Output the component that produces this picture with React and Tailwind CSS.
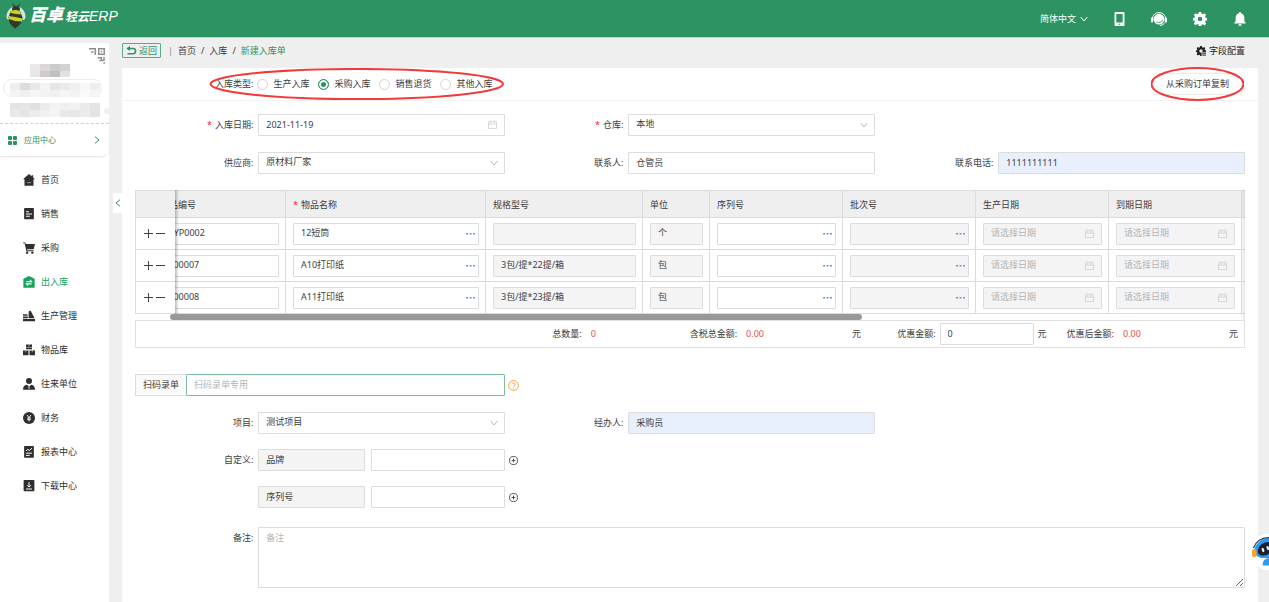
import { useEffect, useId, useRef } from "react";

const field =
  "block h-[22px] w-full min-w-0 rounded-[1px] border border-[#dcdcdc] px-[7px] pb-[2px] text-[9px] text-[#3c3c3c] outline-none placeholder:text-[#b4b4b4]";

function Icon({ size = "size-3", children, box = "0 0 16 16" }) {
  return (
    <svg viewBox={box} className={`${size} shrink-0`} fill="currentColor" aria-hidden="true">
      {children}
    </svg>
  );
}

const HomeIcon = () => (
  <Icon>
    <path d="M8 0 0 7h2v8.500h12V7h2L13.500 4.800V1.500h-2v1.600z" />
    <path d="M5.500 11.500h5" stroke="#999" strokeWidth="1.400" />
  </Icon>
);
const SalesIcon = () => (
  <Icon>
    <rect x="1.500" y="0" width="13" height="15" rx="1" />
    <path d="M4 5h4M4 8h8M4 11h5" stroke="#fff" strokeWidth="1.300" />
  </Icon>
);
const CartIcon = () => (
  <Icon>
    <path d="M0 .5h3l.7 2H16l-1.800 7H5.300l.3 1.500H14v1.200H4.500L2.200 1.800H0z" />
    <circle cx="5.500" cy="14.200" r="1.600" />
    <circle cx="12.500" cy="14.200" r="1.600" />
  </Icon>
);
const StockIcon = () => (
  <Icon>
    <path d="M8 0 .5 3.500V14.500q0 1.200 1.200 1.200h12.600q1.200 0 1.200-1.200V3.500z" />
    <path d="M4.500 7.500h7L9.300 5.300M11.500 10.500h-7l2.200 2.200" stroke="#fff" strokeWidth="1.400" fill="none" />
  </Icon>
);
const FactoryIcon = () => (
  <Icon>
    <path d="M0 5.500h6v2.200H0zM0 8.700h6.500v2.300H0zM0 12h16v3H0zM7.500 11V2L10 .5 15.500 11z" />
  </Icon>
);
const BoxesIcon = () => (
  <Icon>
    <path d="M4 .5h8v6.500H4zM0 8.500h7.300V15H0zM8.700 8.500H16V15H8.700z" />
    <path d="M8 .5v2.500M3.600 8.500V11M12.400 8.500V11M4 4.500h8" stroke="#fff" strokeWidth=".7" />
  </Icon>
);
const PersonIcon = () => (
  <Icon>
    <circle cx="8" cy="4" r="4" />
    <path d="M0 15.500q0-6 5-6.500l3 2 3-2q5 .5 5 6.500z" />
    <path d="M8 10.500v4" stroke="#fff" strokeWidth="1.200" />
  </Icon>
);
const MoneyIcon = () => (
  <Icon>
    <circle cx="8" cy="8" r="8" />
    <path d="M5.500 4 8 7.500 10.500 4M8 7.500V12.500M5.500 8h5M5.500 10.200h5" stroke="#fff" strokeWidth="1.200" fill="none" />
  </Icon>
);
const ReportIcon = () => (
  <Icon>
    <rect x="1.500" y="0" width="13" height="15.500" rx="1" />
    <path d="M4 6.500 6.500 4.500 8.500 6 12 3M4 9.500h8M4 12.500h5" stroke="#fff" strokeWidth="1.300" fill="none" />
  </Icon>
);
const DownloadIcon = () => (
  <Icon>
    <rect x=".8" y="0" width="14.400" height="15" rx="1" />
    <path d="M8 3v6M5.500 7 8 9.500 10.500 7M4 12h8" stroke="#fff" strokeWidth="1.300" fill="none" />
  </Icon>
);

const gearPath =
  "M6.600 0h2.800l.4 2.100 1.500.6L13.100 1.500l1.900 2-1.200 1.800.6 1.400 1.600.3v2.700l-1.600.4-.6 1.400 1.200 1.800-1.900 2-1.800-1.200-1.500.6L9.400 16H6.600l-.4-1.600-1.500-.6-1.800 1.200-1.900-2 1.200-1.800-.6-1.400L0 9.700V7l1.600-.3.6-1.400L1 3.500l1.900-2 1.800 1.200 1.500-.6z";

const GearIcon = () => (
  <Icon size="size-[14px]">
    <path fillRule="evenodd" d={gearPath + "M8 5.300a2.700 2.700 0 1 0 0 5.400a2.700 2.700 0 1 0 0-5.400z"} />
  </Icon>
);

const Chevron = ({ className }) => (
  <svg viewBox="0 0 8 6" className={className} fill="none" stroke="currentColor" aria-hidden="true">
    <path d="M.7 1 4 5 7.300 1" />
  </svg>
);

const CalendarIcon = () => (
  <svg
    viewBox="0 0 10 10"
    className="pointer-events-none absolute top-[6px] right-[8px] size-[9px] text-[#d4d4d4]"
    fill="none"
    stroke="currentColor"
    aria-hidden="true"
  >
    <path d="M.5 2h9v7.500h-9zM.5 4.500h9M3 .2v2.800M7 .2v2.800" />
  </svg>
);

function Bee() {
  return (
    <svg viewBox="0 0 20 26" className="h-[26px] w-5 shrink-0" aria-hidden="true">
      <path d="M8.500 4Q8.500 1.500 6.500 1M11.500 4Q12 1.500 14 1.500" stroke="#333" strokeWidth="1" fill="none" />
      <ellipse cx="5" cy="10.500" rx="3.800" ry="7" fill="#d3e3dd" transform="rotate(25 5 10.500)" />
      <ellipse cx="15" cy="10.500" rx="3.800" ry="7" fill="#d3e3dd" transform="rotate(-25 15 10.500)" />
      <ellipse cx="10" cy="6" rx="4" ry="3" fill="#34382f" />
      <path d="M4.500 8.500Q10 5.500 14.500 9l2 5.500q.5 6-7.500 11Q2.500 21 2.500 14.500z" fill="#34382f" />
      <path d="M5 8.300Q9 6 13.500 8L15.500 11.500Q10 11.500 4 9.800z" fill="#c9d422" />
      <path d="M2.600 13Q9 13.500 16.300 15.500L16 18.500Q9 18.500 2.800 16z" fill="#c9d422" />
    </svg>
  );
}

function Header() {
  return (
    <header className="flex h-[38px] items-center justify-between border-b border-[#b5dac7] bg-[#2d9362] text-white">
      <h1 className="flex items-center pb-[5px] pl-[6px]">
        <Bee />
        <span className="flex items-baseline pl-[3px] leading-5 italic">
          <b className="text-[17px] font-black">百卓</b>
          <span className="pl-[2px] text-[12px] font-bold">轻云</span>
          <span className="font-['Liberation_Sans',sans-serif] text-[14px]">ERP</span>
        </span>
      </h1>
      <nav className="flex items-center gap-[26px] pr-[22px]">
        <button type="button" className="flex items-center gap-1 text-[9px]">
          简体中文
          <Chevron className="h-[6px] w-2" />
        </button>
        <button type="button" aria-label="手机端">
          <Icon size="h-[14px] w-[11px]" box="0 0 11 14">
            <path
              fillRule="evenodd"
              d="M1.500 0h8q1 0 1 1v12q0 1-1 1h-8q-1 0-1-1V1q0-1 1-1zM2.300 2v8.500h6.400V2zM5.500 11.500a.8.800 0 1 0 0 1.600a.8.800 0 1 0 0-1.600z"
            />
          </Icon>
        </button>
        <button type="button" aria-label="客服">
          <Icon size="h-[14px] w-[16px]" box="0 0 16 14">
            <path d="M1.500 6.500a6.500 6 0 0 1 13 0" fill="none" stroke="#fff" strokeWidth="1" />
            <circle cx="8" cy="7.200" r="5.400" />
            <rect x="0" y="5.500" width="2.200" height="5" rx="1" />
            <rect x="13.800" y="5.500" width="2.200" height="5" rx="1" />
            <path d="M14 10.500q-1.500 3-5 3" stroke="#fff" fill="none" strokeWidth="1" />
            <path d="M5.500 10.300q3.500 1.200 6.500-1.800" stroke="#2d9362" fill="none" strokeWidth=".8" />
          </Icon>
        </button>
        <button type="button" aria-label="设置">
          <GearIcon />
        </button>
        <button type="button" aria-label="通知">
          <Icon size="size-[14px]">
            <path d="M8 0q1.200 0 1.300 1.400Q13 2.500 13 7v3.500l2 2.500H1l2-2.500V7q0-4.500 3.700-5.600Q6.800 0 8 0zM6 14h4q-.5 2-2 2t-2-2z" />
          </Icon>
        </button>
      </nav>
    </header>
  );
}

const menu = [
  ["首页", HomeIcon],
  ["销售", SalesIcon],
  ["采购", CartIcon],
  ["出入库", StockIcon],
  ["生产管理", FactoryIcon],
  ["物品库", BoxesIcon],
  ["往来单位", PersonIcon],
  ["财务", MoneyIcon],
  ["报表中心", ReportIcon],
  ["下载中心", DownloadIcon],
];

const mosaic = [
  [30, 21, 7, ["#e9e9e9", "#ddd5d6", "#c9cbcd", "#d3d3d3"]],
  [30, 28, 6, ["#e6e6e6", "#cfcaca", "#bfc1c1", "#e2e2e4"]],
  [10, 40, 7, ["#eeeeee", "#dddddd", "#e8e8e8", "#f3f3f3", "#e6e6e6", "#ebebeb", "#f0f0f0", "#f8f8f8", "#eeeeee"]],
  [10, 47, 7, ["#f4f4f4", "#f0f0f0", "#f6f6f6", "#f3f3f3", "#f0f0f0", "#f5f5f5", "#f2f2f2", "#fafafa", "#f5f5f5"]],
  [10, 60, 7, ["#e4e4e6", "#e6e6e6", "#dfe0e0", "#ececec", "#f3f3f3", "#efefef", "#f2f2f2", "#eaeaea", "#e4e4e4"]],
  [10, 67, 7, ["#e9e9e9", "#e5e5e5", "#ececec", "#f1f1f1", "#f4f4f4", "#e9e9e9", "#e6e6e6", "#ebebeb", "#e3e3e3"]],
];

function Sidebar() {
  return (
    <aside className="w-[109px] shrink-0 bg-white">
      <div className="border-b border-dashed border-[#cfcfcf]">
        <svg viewBox="0 0 109 80" className="block h-20 w-full" aria-hidden="true">
          <rect x="3.500" y="36.500" width="98" height="17" rx="8" fill="#fff" stroke="#ececec" />
          {mosaic.map(([x, y, h, colors]) =>
            colors.map((c, i) => <rect key={`${y}-${i}`} x={x + i * 10} y={y} width="10" height={h} fill={c} />)
          )}
          <circle cx="107" cy="68" r="3" fill="#f0f0f0" />
          <g fill="none" stroke="#8e8e8e" strokeWidth="1.500">
            <path d="M89 5.700h6.300V12M91 9h2.500M98.700 5.700h5.600v5.600h-5.600zM100.800 8.500h1.500M97.500 14.800h3.800v3M104 14v4M103.500 20h1.500M99.500 17.500h4" />
          </g>
        </svg>
      </div>
      <a
        href="#apps"
        className="flex h-[33px] items-center rounded-br-lg border-b border-[#e9e9e9] pr-[8px] pl-2 text-[8px] text-[#2d9362] shadow-[0_1px_2px_rgba(0,0,0,0.04)]"
      >
        <Icon size="size-[9px]" box="0 0 9 9">
          <rect width="4" height="4" rx="1" />
          <rect x="5" width="4" height="4" rx="1" />
          <rect y="5" width="4" height="4" rx="1" />
          <rect x="5" y="5" width="4" height="4" rx="1" />
        </Icon>
        <span className="flex-1 pl-[7px]">应用中心</span>
        <Chevron className="h-[6px] w-2 -rotate-90" />
      </a>
      <nav className="pt-[6px]">
        {menu.map(([name, Glyph]) => (
          <a
            key={name}
            href={`#${name}`}
            className={`flex h-[34px] items-center gap-[6px] pl-[23px] text-[9px] ${
              name === "出入库" ? "text-[#12a45c]" : "text-[#2f2f2f]"
            }`}
          >
            <Glyph />
            {name}
          </a>
        ))}
      </nav>
    </aside>
  );
}

function Labelled({ label, required, children, id }) {
  return (
    <div className="flex w-full items-start">
      <label htmlFor={id} className="w-1/3 pr-[5px] text-right leading-[22px]">
        {required && <span className="pr-[3px] text-[#f5222d]">*</span>}
        {label}:
      </label>
      <div className="relative w-2/3">{children}</div>
    </div>
  );
}

function TextField({ label, value, tinted }) {
  const id = useId();
  return (
    <Labelled label={label} id={id}>
      <input id={id} defaultValue={value} className={`${field} ${tinted ? "bg-[#e8f0fe]" : "bg-white"}`} />
    </Labelled>
  );
}

function SelectField({ label, value, required }) {
  const id = useId();
  return (
    <Labelled label={label} required={required} id={id}>
      <select id={id} className={`${field} appearance-none bg-white`}>
        <option>{value}</option>
      </select>
      <Chevron className="pointer-events-none absolute top-2 right-[7px] h-[6px] w-2 text-[#b5b5b5]" />
    </Labelled>
  );
}

function DateField({ label, value }) {
  const id = useId();
  return (
    <Labelled label={label} required id={id}>
      <input id={id} defaultValue={value} className={`${field} bg-white`} />
      <CalendarIcon />
    </Labelled>
  );
}

function Ellipse() {
  return (
    <svg
      viewBox="0 0 100 100"
      preserveAspectRatio="none"
      className="size-full"
      fill="none"
      stroke="#f23a3a"
      strokeWidth="2"
      aria-hidden="true"
    >
      <ellipse cx="50" cy="50" rx="49.500" ry="47" vectorEffect="non-scaling-stroke" />
    </svg>
  );
}

const types = ["生产入库", "采购入库", "销售退货", "其他入库"];

function TypeBar() {
  return (
    <div className="flex h-[33px] items-center justify-between border-b border-[#f2f2f2] pr-4 pl-[93px]">
      <fieldset className="relative flex items-center">
        <legend className="float-left pr-1">入库类型:</legend>
        <div className="flex gap-[9px]">
          {types.map((t) => (
            <label key={t} className="flex items-center gap-[5px]">
              <input
                type="radio"
                name="type"
                defaultChecked={t === "采购入库"}
                className="size-[11px] appearance-none rounded-full border border-[#d4d4d4] bg-white checked:border-[#2d9362] checked:bg-[#2d9362] checked:shadow-[inset_0_0_0_2px_#fff]"
              />
              {t}
            </label>
          ))}
        </div>
        <div className="pointer-events-none absolute -top-[9px] -right-3 -bottom-[9px] -left-[6px]">
          <Ellipse />
        </div>
      </fieldset>
      <div className="relative">
        <button type="button" className="block h-[22px] w-[89px] rounded-[1px] border border-[#ececec] bg-white">
          从采购订单复制
        </button>
        <div className="pointer-events-none absolute -inset-x-[2px] -inset-y-[6px]">
          <Ellipse />
        </div>
      </div>
    </div>
  );
}

function MoreButton({ label }) {
  return (
    <button type="button" aria-label={label} className="absolute top-[5px] right-1 flex h-3 items-center text-[#5b9bea]">
      <svg viewBox="0 0 9 2" className="h-[2px] w-[9px]" fill="currentColor" aria-hidden="true">
        <path d="M0 0h2v1.500H0zM3.500 0h2v1.500h-2zM7 0h2v1.500H7z" />
      </svg>
    </button>
  );
}

const columns = [
  { name: "物品编号", w: "w-[133px]" },
  { name: "物品名称", w: "w-[200px]", required: true },
  { name: "规格型号", w: "w-[157px]" },
  { name: "单位", w: "w-[67px]" },
  { name: "序列号", w: "w-[133px]" },
  { name: "批次号", w: "w-[133px]" },
  { name: "生产日期", w: "w-[133px]" },
  { name: "到期日期", w: "w-[133px]" },
  { name: "", w: "w-[400px]" },
];

const rows = [
  { code: "CYP0002", name: "12短筒", spec: "", unit: "个" },
  { code: "P00007", name: "A10打印纸", spec: "3包/提*22提/箱", unit: "包" },
  { code: "P00008", name: "A11打印纸", spec: "3包/提*23提/箱", unit: "包" },
];

function Cell({ label, value, disabled, more, date }) {
  return (
    <td className="border-r border-b border-[#dcdcdc] pr-[6px] pl-[7px]">
      <div className="relative">
        <input
          aria-label={label}
          defaultValue={value}
          disabled={disabled}
          placeholder={date ? "请选择日期" : undefined}
          className={`${field} ${disabled ? "bg-[#f4f4f4]" : "bg-white"}`}
        />
        {more && <MoreButton label={`选择${label}`} />}
        {date && <CalendarIcon />}
      </div>
    </td>
  );
}

function ItemsTable() {
  const scroller = useRef(null);
  useEffect(() => {
    scroller.current.scrollLeft = 22;
  }, []);
  const pinned = "sticky left-0 z-10 border-b border-l border-[#dcdcdc]";
  return (
    <div className="relative">
      <div ref={scroller} className="overflow-x-auto [scrollbar-width:none]">
        <table className="w-[1529px] table-fixed border-separate border-spacing-0 text-left">
          <thead>
            <tr className="h-7">
              <th className={`${pinned} w-10 border-t bg-[#efefef]`} aria-label="操作" />
              {columns.map((c) => (
                <th
                  key={c.name}
                  className={`${c.w} border-t border-r border-b border-[#dcdcdc] bg-[#efefef] px-[7px] pt-[2px] font-normal`}
                >
                  {c.required && <span className="pr-[3px] text-[#f5222d]">*</span>}
                  {c.name}
                </th>
              ))}
            </tr>
          </thead>
          <tbody>
            {rows.map((r) => (
              <tr key={r.code} className="h-8">
                <td className={`${pinned} bg-white`}>
                  <div className="flex items-center gap-[3px] pl-2">
                    <button type="button" aria-label="增加一行">
                      <svg viewBox="0 0 9 9" className="size-[9px]" stroke="#444" aria-hidden="true">
                        <path d="M4.500 0v9M0 4.500h9" />
                      </svg>
                    </button>
                    <button type="button" aria-label="删除此行">
                      <svg viewBox="0 0 9 9" className="size-[9px]" stroke="#444" aria-hidden="true">
                        <path d="M0 4.500h9" />
                      </svg>
                    </button>
                  </div>
                </td>
                <Cell label="物品编号" value={r.code} />
                <Cell label="物品名称" value={r.name} more />
                <Cell label="规格型号" value={r.spec} disabled />
                <Cell label="单位" value={r.unit} disabled />
                <Cell label="序列号" more />
                <Cell label="批次号" disabled more />
                <Cell label="生产日期" disabled date />
                <Cell label="到期日期" disabled date />
                <td className="border-b border-[#dcdcdc]" />
              </tr>
            ))}
          </tbody>
        </table>
      </div>
      <div className="h-[6px] pl-[35px]">
        <div className="h-[6px] w-[64.400%] rounded-full bg-[#999]" />
      </div>
      <div className="pointer-events-none absolute top-0 bottom-[6px] left-10 z-20 w-1 bg-linear-to-r from-black/25 to-transparent" />
      <div className="pointer-events-none absolute inset-y-0 right-0 w-1 bg-linear-to-r from-transparent to-black/10" />
    </div>
  );
}

function Summary() {
  return (
    <div className="flex h-7 items-center justify-end border border-[#e0e0e0] pr-[6px] whitespace-nowrap">
      <span>总数量:</span>
      <output className="w-[108px] pl-[9px] text-[#e0504e]">0</output>
      <span>含税总金额:</span>
      <output className="w-[115px] pl-[9px] text-[#e0504e]">0.00</output>
      <span>元</span>
      <label htmlFor="discount" className="pl-9">
        优惠金额:
      </label>
      <div className="w-[98px] pl-1">
        <input id="discount" defaultValue="0" className={`${field} bg-white`} />
      </div>
      <span className="pl-1">元</span>
      <span className="pl-5">优惠后金额:</span>
      <output className="w-[115px] pl-[9px] text-[#e0504e]">0.00</output>
      <span>元</span>
    </div>
  );
}

function CustomRow({ label, name }) {
  return (
    <div className="flex items-center">
      <div className="flex w-1/3">
        <span className="w-1/3 pr-[5px] text-right leading-[22px]">{label}</span>
        <div className="flex w-2/3 gap-[6px]">
          <div className="w-[107px] shrink-0">
            <input aria-label="字段名称" disabled defaultValue={name} className={`${field} bg-[#f4f4f4]`} />
          </div>
          <input aria-label={name} className={`${field} bg-white`} />
        </div>
      </div>
      <button type="button" aria-label="添加" className="pl-1">
        <svg viewBox="0 0 10 10" className="size-[9px]" fill="none" stroke="#444" aria-hidden="true">
          <circle cx="5" cy="5" r="4.500" />
          <path d="M5 2.800v4.400M2.800 5h4.400" />
        </svg>
      </button>
    </div>
  );
}

function Robot() {
  return (
    <button type="button" aria-label="智能客服" className="absolute top-[495px] right-0">
      <svg viewBox="0 0 19 38" className="block h-[38px] w-[19px]" aria-hidden="true">
        <circle cx="19" cy="19" r="18.500" fill="#fff" />
        <path d="M4 17Q7 6 19 4.500V25H11Q4 23 4 17z" fill="#2b9bf4" />
        <path d="M3.500 15Q7 5 19 4.500" fill="none" stroke="#2b2b38" strokeWidth="1.200" />
        <rect x="2" y="16" width="4.500" height="8" rx="2" fill="#f5a623" />
        <path d="M8 17Q10 9 19 9v12q-4 2-8 1.500Q7 21 8 17z" fill="#1d2033" />
        <ellipse cx="13" cy="17" rx="1.200" ry="2.200" fill="#fff" transform="rotate(-20 13 17)" />
        <ellipse cx="17.800" cy="15" rx="1.100" ry="2" fill="#fff" transform="rotate(-20 17.800 15)" />
        <path d="M12.500 32.500q0-7 6.500-7.500v7.500z" fill="#2b9bf4" />
      </svg>
    </button>
  );
}

export default function App() {
  return (
    <div className="flex min-h-screen flex-col bg-[#efefef] font-['Noto_Sans','Noto_Sans_CJK_SC',sans-serif] text-[9px] leading-[14px] text-[#3c3c3c]">
      <Header />
      <div className="relative flex flex-1 overflow-hidden pt-[5px]">
        <Sidebar />
        <main className="relative flex min-w-0 flex-1 flex-col pr-[11px] pl-[13px]">
          <div className="flex h-[15px] items-center justify-between">
            <nav className="flex items-center gap-[5px]">
              <a
                href="#back"
                className="mr-[2px] flex h-[15px] items-center gap-[2px] rounded-[1px] border border-[#5bab85] px-[3px] text-[#2d9362]"
              >
                <svg viewBox="0 0 11 9" className="h-[9px] w-[11px]" fill="none" stroke="currentColor" strokeWidth="1.500" aria-hidden="true">
                  <path d="M1.500 2.500H7a2.600 2.600 0 0 1 0 5.200H1.500" />
                  <path d="M4 0v5L.3 2.500z" fill="currentColor" stroke="none" />
                </svg>
                返回
              </a>
              <span className="text-[#8a8a8a]">|</span>
              <a href="#home">首页</a>
              <span>/</span>
              <a href="#stock">入库</a>
              <span>/</span>
              <span className="text-[#2d9362]">新建入库单</span>
            </nav>
            <button type="button" className="flex items-center gap-[3px] pr-[13px] text-[#222]">
              <Icon size="size-[10px]">
                <path fillRule="evenodd" d={gearPath + "M8 5.300a2.700 2.700 0 1 0 0 5.400a2.700 2.700 0 1 0 0-5.400z"} />
                <path d="M9 10h7v6H9z" fill="#efefef" />
                <path d="M10 11.500h6M10 14.500h6" stroke="currentColor" strokeWidth="1.600" />
              </Icon>
              字段配置
            </button>
          </div>

          <button
            type="button"
            aria-label="收起菜单"
            className="absolute top-[150px] left-1 flex h-5 w-[9px] items-center justify-center bg-white text-[#2d9362]"
          >
            <Chevron className="h-[6px] w-2 rotate-90" />
          </button>

          <section className="mt-[10px] flex-1 bg-white">
            <TypeBar />
            <form className="px-[13px] pt-[13px] pb-3" onSubmit={(e) => e.preventDefault()}>
              <div className="grid grid-cols-3 gap-y-4">
                <DateField label="入库日期" value="2021-11-19" />
                <SelectField label="仓库" value="本地" required />
                <span />
                <SelectField label="供应商" value="原材料厂家" />
                <TextField label="联系人" value="仓管员" />
                <TextField label="联系电话" value="1111111111" tinted />
              </div>

              <div className="mt-4">
                <ItemsTable />
                <Summary />
              </div>

              <div className="mt-[26px] flex items-center">
                <div className="flex w-1/3">
                  <label
                    htmlFor="scan"
                    className="h-[22px] shrink-0 border border-r-0 border-[#dcdcdc] bg-[#fafafa] px-[7px] leading-5"
                  >
                    扫码录单
                  </label>
                  <input
                    id="scan"
                    placeholder="扫码录单专用"
                    className="h-[22px] min-w-0 flex-1 rounded-[1px] border border-[#7fbd9f] bg-white px-[7px] pb-[2px] text-[9px] outline-none placeholder:text-[#b4b4b4]"
                  />
                </div>
                <button type="button" aria-label="帮助" className="pl-[3px]">
                  <svg viewBox="0 0 11 11" className="size-[11px]" fill="none" stroke="#f7a13d" aria-hidden="true">
                    <circle cx="5.500" cy="5.500" r="4.900" />
                    <path d="M3.900 4.400a1.600 1.600 0 1 1 2.300 1.400q-.7.400-.7 1.100M5.500 7.700v1" />
                  </svg>
                </button>
              </div>

              <div className="mt-4 grid grid-cols-3">
                <SelectField label="项目" value="测试项目" />
                <TextField label="经办人" value="采购员" tinted />
              </div>

              <div className="mt-[15px] flex flex-col gap-[15px]">
                <CustomRow label="自定义:" name="品牌" />
                <CustomRow label="" name="序列号" />
              </div>

              <div className="mt-[19px] flex">
                <label htmlFor="remark" className="w-1/9 shrink-0 pr-[5px] text-right leading-[22px]">
                  备注:
                </label>
                <textarea
                  id="remark"
                  placeholder="备注"
                  className="block h-[61px] flex-1 resize-y rounded-[1px] border border-[#dcdcdc] bg-white px-[7px] py-[3px] text-[9px] outline-none placeholder:text-[#b4b4b4]"
                />
              </div>
            </form>
          </section>
        </main>
        <Robot />
      </div>
    </div>
  );
}
